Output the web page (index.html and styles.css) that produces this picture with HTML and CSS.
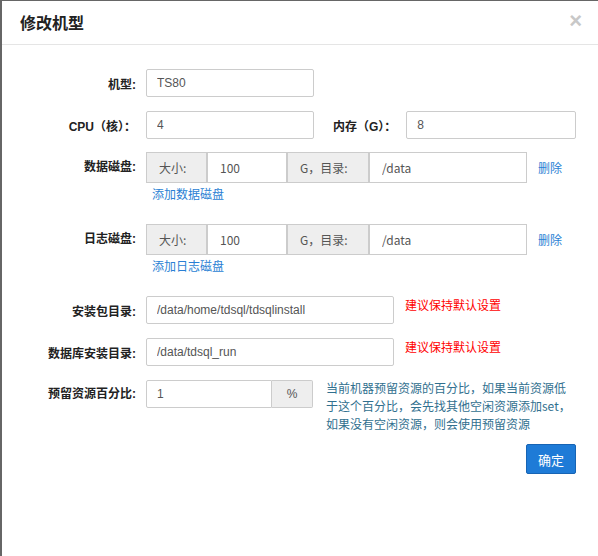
FILE: index.html
```html
<!DOCTYPE html>
<html lang="zh-CN">
<head>
    <meta charset="UTF-8">
    <title>修改机型</title>
    <link rel="stylesheet" href="styles.css">
</head>
<body>
    <div class="modal">
        <div class="modal-header">
            <h4 class="modal-title">修改机型</h4>
            <span class="close">×</span>
        </div>
        <div class="modal-body">
            <div class="row r1">
                <label class="lbl">机型:</label>
                <input class="ipt w168" type="text" value="TS80">
            </div>
            <div class="row r2">
                <label class="lbl">CPU（核）：</label>
                <input class="ipt w168" type="text" value="4">
                <label class="lbl-inline">内存（G）：</label>
                <input class="ipt w170" type="text" value="8">
            </div>
            <div class="row r3">
                <label class="lbl">数据磁盘:</label>
                <div class="disk">
                    <div class="group">
                        <span class="addon a-size">大小:</span>
                        <input class="g-ipt g-size" type="text" value="100">
                        <span class="addon a-dir">G，目录:</span>
                        <input class="g-ipt g-dir" type="text" value="/data">
                    </div>
                    <a class="add-link" href="#">添加数据磁盘</a>
                </div>
                <a class="del" href="#">删除</a>
            </div>
            <div class="row r4">
                <label class="lbl">日志磁盘:</label>
                <div class="disk">
                    <div class="group">
                        <span class="addon a-size">大小:</span>
                        <input class="g-ipt g-size" type="text" value="100">
                        <span class="addon a-dir">G，目录:</span>
                        <input class="g-ipt g-dir" type="text" value="/data">
                    </div>
                    <a class="add-link" href="#">添加日志磁盘</a>
                </div>
                <a class="del" href="#">删除</a>
            </div>
            <div class="row r5">
                <label class="lbl">安装包目录:</label>
                <input class="ipt w248" type="text" value="/data/home/tdsql/tdsqlinstall">
                <span class="warn">建议保持默认设置</span>
            </div>
            <div class="row r6">
                <label class="lbl">数据库安装目录:</label>
                <input class="ipt w248" type="text" value="/data/tdsql_run">
                <span class="warn">建议保持默认设置</span>
            </div>
            <div class="row r7">
                <label class="lbl">预留资源百分比:</label>
                <div class="pct-group">
                    <input class="ipt pct-ipt" type="text" value="1">
                    <span class="pct-addon">%</span>
                </div>
                <p class="help">当前机器预留资源的百分比，如果当前资源低于这个百分比，会先找其他空闲资源添加set，如果没有空闲资源，则会使用预留资源</p>
            </div>
            <div class="footer">
                <button class="btn-ok">确定</button>
            </div>
        </div>
    </div>
</body>
</html>
```

FILE: styles.css
```css
* {
    box-sizing: border-box;
}

body {
    margin: 0;
    background: #666;
    font-family: "Liberation Sans", "Noto Sans CJK SC", sans-serif;
    font-size: 12px;
    color: #333;
}

.modal {
    margin: 1px 0 0 2px;
    height: 555px;
    background: #fff;
}

.modal-header {
    height: 44px;
    border-bottom: 1px solid #e5e5e5;
    display: flex;
    align-items: flex-start;
    padding: 0 16px 0 18px;
}

.modal-title {
    margin: 10px 0 0 0;
    font-family: "Noto Sans CJK SC", sans-serif;
    font-size: 16px;
    line-height: 22px;
    font-weight: bold;
    color: #222;
}

.close {
    margin-left: auto;
    margin-top: 9px;
    font-size: 22px;
    line-height: 22px;
    font-weight: bold;
    color: #c8c8c8;
}

.modal-body {
    padding: 24px 22px 0 0;
}

.row {
    display: flex;
    align-items: center;
    white-space: nowrap;
}

.r1 { margin-bottom: 14px; }
.r2 { margin-bottom: 13px; }
.r3, .r4 { margin-bottom: 21px; align-items: flex-start; }
.r5, .r6 { margin-bottom: 14px; }
.r7 { margin-bottom: 11px; align-items: flex-start; }

.lbl {
    flex-shrink: 0;
    width: 134px;
    margin-right: 10px;
    text-align: right;
    font-weight: bold;
    color: #222;
}

.r3 .lbl, .r4 .lbl {
    line-height: 31px;
}

.r7 .lbl {
    line-height: 28px;
}

.lbl-inline {
    flex-shrink: 0;
    margin: 0 10px 0 19px;
    font-weight: bold;
    color: #222;
}

.ipt {
    flex-shrink: 0;
    height: 28px;
    padding: 0 10px;
    border: 1px solid #ccc;
    border-radius: 2px;
    font-family: "Liberation Sans", "Noto Sans CJK SC", sans-serif;
    font-size: 12px;
    color: #555;
    outline: none;
}

.w168 { width: 168px; }
.w170 { width: 170px; }
.w248 { width: 248px; }

/* 磁盘输入组 */
.disk {
    flex-shrink: 0;
}

.group {
    display: flex;
    height: 31px;
}

.addon {
    display: flex;
    align-items: center;
    padding-left: 12px;
    border: 1px solid #ccc;
    background: #eee;
    font-family: "Noto Sans CJK SC", sans-serif;
    font-size: 12px;
    color: #555;
}

.a-size { width: 61px; }
.a-dir { width: 82px; }

.g-ipt {
    height: 31px;
    padding: 0 12px;
    border: 1px solid #ccc;
    font-family: "Noto Sans CJK SC", sans-serif;
    font-size: 12px;
    color: #555;
    outline: none;
}

.g-size { width: 80px; }
.g-dir { width: 158px; }

.add-link {
    display: block;
    margin: 2px 0 0 6px;
    line-height: 18px;
    font-family: "Noto Sans CJK SC", sans-serif;
    font-size: 12px;
    color: #2a7fd4;
    text-decoration: none;
}

.del {
    margin-left: 11px;
    line-height: 31px;
    font-family: "Noto Sans CJK SC", sans-serif;
    color: #2a7fd4;
    text-decoration: none;
}

.warn {
    align-self: flex-start;
    margin-left: 11px;
    line-height: 18px;
    font-family: "Noto Sans CJK SC", sans-serif;
    color: #f00;
}

.pct-group {
    display: flex;
    flex-shrink: 0;
}

.pct-ipt {
    width: 126px;
    border-radius: 2px 0 0 2px;
}

.pct-addon {
    width: 41px;
    height: 28px;
    display: flex;
    align-items: center;
    justify-content: center;
    border: 1px solid #ccc;
    border-left: none;
    border-radius: 0 2px 2px 0;
    background: #eee;
    color: #555;
    font-size: 12px;
}

.help {
    width: 254px;
    margin: -1px 0 0 13px;
    white-space: normal;
    line-height: 18px;
    font-family: "Noto Sans CJK SC", sans-serif;
    color: #31708f;
}

.footer {
    display: flex;
    justify-content: flex-end;
}

.btn-ok {
    width: 50px;
    height: 30px;
    border: 1px solid #1764b4;
    border-radius: 2px;
    background: #1e7bd7;
    color: #fff;
    font-family: "Noto Sans CJK SC", sans-serif;
    font-size: 13px;
    padding: 0;
}
```
